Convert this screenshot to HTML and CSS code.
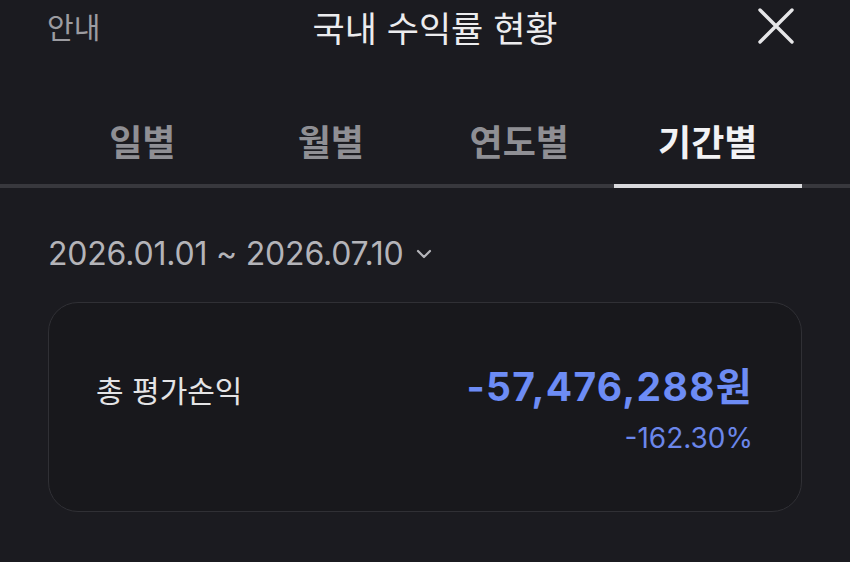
FILE: index.html
```html
<!DOCTYPE html>
<html lang="ko">
<head>
  <meta charset="utf-8">
  <meta name="viewport" content="width=device-width, initial-scale=1">
  <title>국내 수익률 현황</title>
  <link rel="stylesheet" href="styles.css">
</head>
<body>

<header class="topbar">
  <div class="guide">안내</div>
  <div class="title">국내 수익률 현황</div>
  <button class="close" type="button" aria-label="닫기">
    <svg width="38" height="38" viewBox="0 0 38 38">
      <path d="M3 3 L35 35 M35 3 L3 35" stroke="#e6e6e8" stroke-width="3.4" stroke-linecap="round" fill="none"/>
    </svg>
  </button>
</header>

<nav class="tabs">
  <div class="tab">일별</div>
  <div class="tab">월별</div>
  <div class="tab">연도별</div>
  <div class="tab active">기간별</div>
</nav>

<main class="content">
  <div class="period">
    <span>2026.01.01 ~ 2026.07.10</span>
    <svg class="chevron" width="16" height="10" viewBox="0 0 16 10">
      <path d="M2 2 L8 8 L14 2" stroke="#b4b4b9" stroke-width="2.2" stroke-linecap="round" stroke-linejoin="round" fill="none"/>
    </svg>
  </div>

  <section class="card">
    <div class="label">총 평가손익</div>
    <div class="values">
      <div class="amount">-57,476,288원</div>
      <div class="rate">-162.30%</div>
    </div>
  </section>
</main>

</body>
</html>
```

FILE: styles.css
```css
body {
  margin: 0;
  background-color: #1b1b20;
  color: #e8e8ea;
  font-family: Inter, "Noto Sans CJK KR", sans-serif;
  width: 850px;
  height: 562px;
  overflow: hidden;
}

/* Top bar */
.topbar {
  display: flex;
  align-items: center;
  justify-content: space-between;
  height: 52px;
  padding: 0 55px 0 47px;
}

.guide {
  width: 130px;
  font-size: 29px;
  color: #9c9ca1;
}

.title {
  font-size: 35px;
  color: #ececee;
  margin-left: 28px;
}

.close {
  width: 130px;
  display: flex;
  justify-content: flex-end;
  padding: 0;
  background: none;
  border: none;
}

/* Tabs */
.tabs {
  display: flex;
  margin-top: 62px;
  padding: 0 48px;
  border-bottom: 4px solid #38383d;
}

.tab {
  flex: 1;
  text-align: center;
  font-size: 36px;
  font-weight: 700;
  color: #8f8f94;
  padding-bottom: 18px;
  margin-bottom: -4px;
  border-bottom: 4px solid transparent;
}

.tab.active {
  color: #f2f2f4;
  border-bottom-color: #d9d9dc;
}

/* Content */
.content {
  padding: 0 48px;
}

.period {
  display: flex;
  align-items: center;
  gap: 12px;
  margin-top: 46px;
  font-size: 32px;
  letter-spacing: -0.2px;
  color: #b4b4b9;
}

.card {
  display: flex;
  justify-content: space-between;
  align-items: flex-start;
  margin-top: 29px;
  height: 210px;
  box-sizing: border-box;
  padding: 60px 48px 0 47px;
  border: 1px solid #303035;
  border-radius: 30px;
  background-color: #18181c;
}

.label {
  font-size: 30px;
  color: #e4e4e6;
  margin-top: 4px;
}

.values {
  text-align: right;
}

.amount {
  font-size: 39px;
  font-weight: 700;
  letter-spacing: 1.3px;
  color: #6d8cf5;
  line-height: 48px;
}

.rate {
  font-size: 28px;
  color: #6b86ea;
  margin-top: 10px;
}
```
